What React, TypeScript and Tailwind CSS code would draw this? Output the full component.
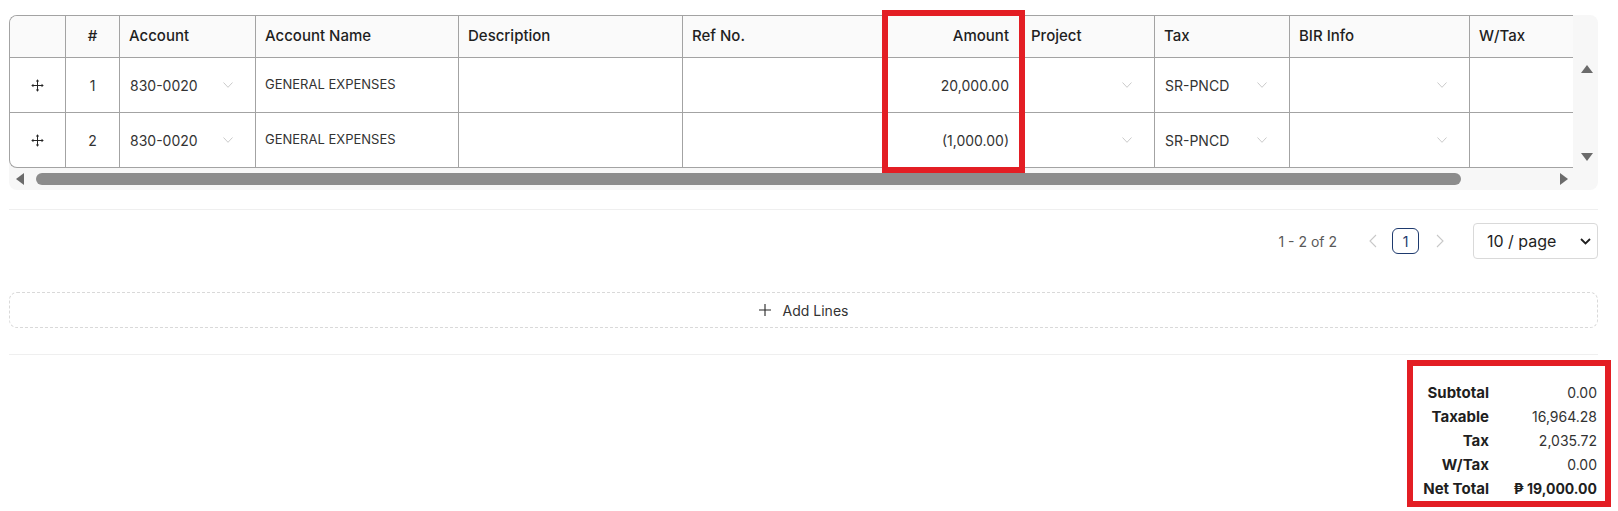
import React from "react";

const widths = [
  "w-[56px]",
  "w-[54px]",
  "w-[136px]",
  "w-[203px]",
  "w-[224px]",
  "w-[203px]",
  "w-[136px]",
  "w-[133px]",
  "w-[135px]",
  "w-[180px]",
  "w-[150px]",
  "w-[110px]",
];

const headers = [
  "",
  "#",
  "Account",
  "Account Name",
  "Description",
  "Ref No.",
  "Amount",
  "Project",
  "Tax",
  "BIR Info",
  "W/Tax",
  "",
];

const lines = [
  { n: 1, account: "830-0020", name: "GENERAL EXPENSES", amount: "20,000.00", tax: "SR-PNCD" },
  { n: 2, account: "830-0020", name: "GENERAL EXPENSES", amount: "(1,000.00)", tax: "SR-PNCD" },
];

const totals = [
  { label: "Subtotal", value: "0.00" },
  { label: "Taxable", value: "16,964.28" },
  { label: "Tax", value: "2,035.72" },
  { label: "W/Tax", value: "0.00" },
];

function DragIcon() {
  return (
    <svg width="13" height="13" viewBox="0 0 14 14" fill="none">
      <path d="M7 2V12M2 7H12" stroke="#262626" strokeWidth="1.1" />
      <path d="M7 0.3L5.2 2.6H8.8Z M7 13.7L5.2 11.4H8.8Z M0.3 7L2.6 5.2V8.8Z M13.7 7L11.4 5.2V8.8Z" fill="#262626" />
    </svg>
  );
}

function Chevron() {
  return (
    <svg width="10" height="6" viewBox="0 0 10 6" fill="none" className="shrink-0">
      <path d="M0.5 0.5L5 5.3L9.5 0.5" stroke="#c4c4c4" strokeWidth="0.9" />
    </svg>
  );
}

function SelectCell({ w, value }: { w: string; value?: string }) {
  return (
    <div className={`${w} shrink-0 border-r border-[#a3a3a3] flex items-center justify-between pl-[10px] pr-[22px]`}>
      <span className="text-[14px]">{value}</span>
      <Chevron />
    </div>
  );
}

export default function App() {
  return (
    <div
      className="relative w-[1618px] h-[511px] bg-white pl-[9px] pr-[20px] pt-[15px] text-[#262626]"
      style={{ fontFamily: "Inter, 'Noto Sans', sans-serif" }}
    >
      {/* table with scroll area */}
      <div className="flex flex-col rounded-lg bg-[#f7f7f7] w-[1589px]">
        <div className="flex">
          <div className="w-[1564px] overflow-hidden rounded-l-lg border-l border-t border-b border-[#a3a3a3] bg-white">
            <div className="flex w-max h-[42px] border-b border-[#a3a3a3] bg-[#fafafa] text-[15px] font-medium text-[#1f1f1f]">
              {headers.map((h, i) => (
                <div
                  key={i}
                  className={`${widths[i]} shrink-0 border-r border-[#a3a3a3] flex items-center px-[9px] ${
                    i === 1 ? "justify-center" : i === 6 ? "justify-end pr-[12px]" : ""
                  }`}
                >
                  {h}
                </div>
              ))}
            </div>
            {lines.map((line, r) => (
              <div
                key={line.n}
                className={`flex w-max text-[13px] text-[#333] ${
                  r === 0 ? "h-[55px] border-b border-[#a3a3a3]" : "h-[54px]"
                }`}
              >
                <div className={`${widths[0]} shrink-0 border-r border-[#a3a3a3] flex items-center justify-center`}>
                  <DragIcon />
                </div>
                <div className={`${widths[1]} shrink-0 border-r border-[#a3a3a3] flex items-center justify-center text-[14px]`}>
                  {line.n}
                </div>
                <SelectCell w={widths[2]} value={line.account} />
                <div className={`${widths[3]} shrink-0 border-r border-[#a3a3a3] flex items-center px-[9px]`}>
                  {line.name}
                </div>
                <div className={`${widths[4]} shrink-0 border-r border-[#a3a3a3]`} />
                <div className={`${widths[5]} shrink-0 border-r border-[#a3a3a3]`} />
                <div className={`${widths[6]} shrink-0 border-r border-[#a3a3a3] flex items-center justify-end pr-[12px] text-[14px]`}>
                  {line.amount}
                </div>
                <SelectCell w={widths[7]} />
                <SelectCell w={widths[8]} value={line.tax} />
                <SelectCell w={widths[9]} />
                <SelectCell w={widths[10]} />
                <div className={`${widths[11]} shrink-0 border-r border-[#a3a3a3]`} />
              </div>
            ))}
          </div>
          {/* vertical scrollbar */}
          <div className="w-[25px] flex flex-col">
            <div className="h-[43px]" />
            <div className="h-[110px] flex flex-col items-center justify-between py-[7px] pl-[2px]">
              <svg width="12" height="8" viewBox="0 0 12 8">
                <path d="M6 0L12 8H0Z" fill="#6b6b6b" />
              </svg>
              <svg width="12" height="8" viewBox="0 0 12 8">
                <path d="M6 8L0 0H12Z" fill="#6b6b6b" />
              </svg>
            </div>
          </div>
        </div>
        {/* horizontal scrollbar */}
        <div className="h-[22px] flex items-center">
          <div className="w-[1564px] flex items-center pl-[7px] pr-[5px]">
            <svg width="8" height="12" viewBox="0 0 8 12">
              <path d="M0 6L8 0V12Z" fill="#6b6b6b" />
            </svg>
            <div className="ml-[12px] w-[1425px] h-[12px] rounded-full bg-[#8c8c8c]" />
            <div className="flex-1" />
            <svg width="8" height="12" viewBox="0 0 8 12">
              <path d="M8 6L0 0V12Z" fill="#6b6b6b" />
            </svg>
          </div>
        </div>
      </div>

      <div className="mt-[19px] border-t border-[#efefef]" />

      {/* pagination */}
      <div className="mt-[13px] h-[36px] flex items-center justify-end text-[14px]">
        <span className="text-[#595959]">1 - 2 of 2</span>
        <div className="ml-[22px] w-[27px] flex justify-center">
          <svg width="8" height="14" viewBox="0 0 8 14" fill="none">
            <path d="M7 1L1 7L7 13" stroke="#c8c8c8" strokeWidth="1.1" />
          </svg>
        </div>
        <div className="ml-[6px] w-[27px] h-[26px] rounded-[6px] border border-[#1e3a6e] flex items-center justify-center text-[#1e3a6e] text-[14px]">
          1
        </div>
        <div className="ml-[7px] w-[27px] flex justify-center">
          <svg width="8" height="14" viewBox="0 0 8 14" fill="none">
            <path d="M1 1L7 7L1 13" stroke="#c8c8c8" strokeWidth="1.1" />
          </svg>
        </div>
        <div className="ml-[20px] w-[125px] h-[36px] rounded-[4px] border border-[#d9d9d9] flex items-center justify-between pl-[13px] pr-[6px] text-[16px] text-[#1f1f1f]">
          <span>10 / page</span>
          <svg width="11" height="7" viewBox="0 0 11 7" fill="none">
            <path d="M1 1L5.5 5.5L10 1" stroke="#1f1f1f" strokeWidth="1.8" />
          </svg>
        </div>
      </div>

      {/* add lines */}
      <div className="mt-[33px] h-[36px] rounded-lg border border-dashed border-[#d9d9d9] flex items-center justify-center gap-[12px] text-[14px] text-[#333]">
        <svg width="12" height="12" viewBox="0 0 12 12" fill="none">
          <path d="M6 0V12M0 6H12" stroke="#262626" strokeWidth="1.1" />
        </svg>
        <span>Add Lines</span>
      </div>

      <div className="mt-[26px] border-t border-[#efefef]" />

      {/* totals */}
      <div className="mt-[26px] flex justify-end pr-[1px]">
        <div className="grid grid-cols-[auto_84px] gap-x-[24px] text-[14px] leading-[24px]">
          {totals.map((t) => (
            <React.Fragment key={t.label}>
              <div className="text-right font-bold text-[15px] text-[#1f1f1f]">{t.label}</div>
              <div className="text-right text-[#333]">{t.value}</div>
            </React.Fragment>
          ))}
          <div className="text-right font-bold text-[15px] text-[#1f1f1f]">Net Total</div>
          <div className="text-right font-bold text-[#1f1f1f] whitespace-nowrap">₱ 19,000.00</div>
        </div>
      </div>

      {/* highlight boxes */}
      <div className="absolute left-[882px] top-[10px] w-[143px] h-[163px] border-[6px] border-[#e31e24]" />
      <div className="absolute left-[1407px] top-[360px] w-[204px] h-[147px] border-[6px] border-[#e31e24]" />
    </div>
  );
}
